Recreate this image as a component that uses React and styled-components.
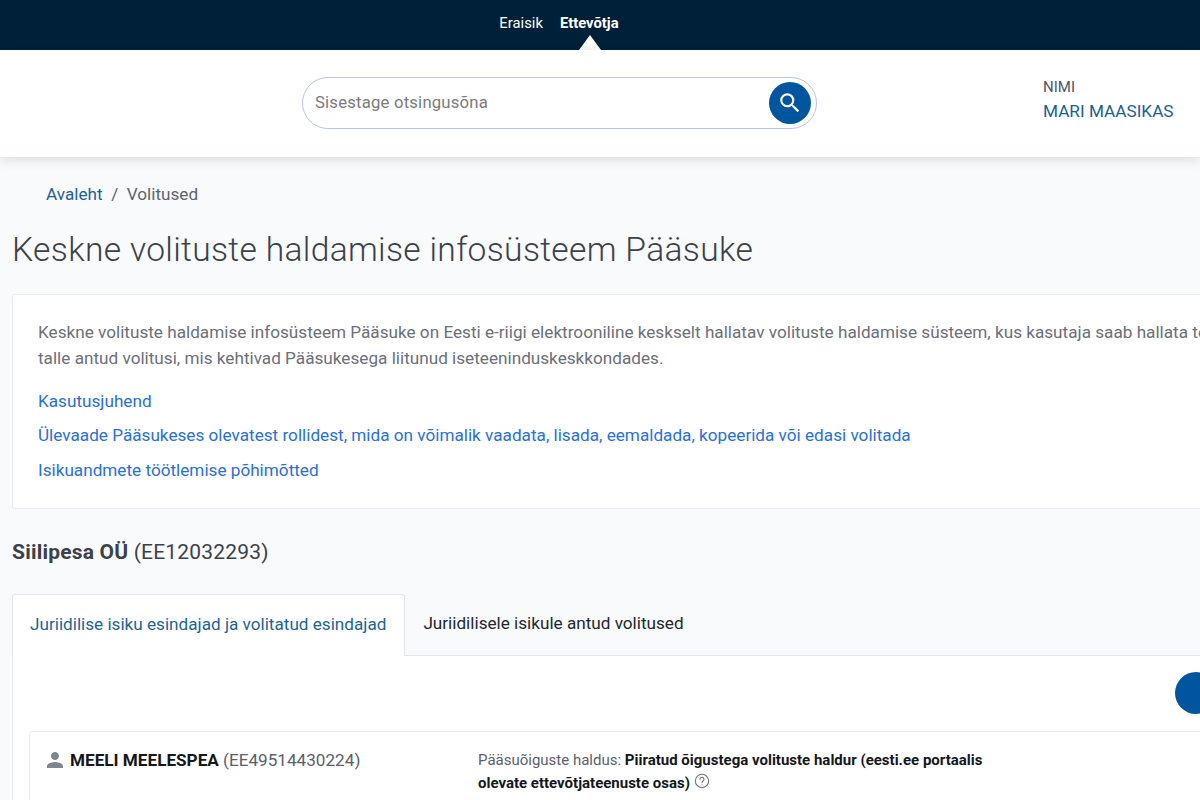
import React from "react";
import styled, { createGlobalStyle } from "styled-components";

const Global = createGlobalStyle`
  html, body { margin: 0; padding: 0; height: 100%; overflow: hidden; background: #f9fafc; }
  body { font-family: Roboto, "Liberation Sans", sans-serif; }
  * { box-sizing: border-box; }
`;
const Page = styled.div`
  width: 1200px; height: 800px; overflow: hidden; background: #f9fafc;
`;
const TopBar = styled.nav`
  height: 50px; background: #002039; display: flex; justify-content: center; align-items: flex-start;
  gap: 17px; padding-top: 15px; padding-right: 82px;
`;
const TopLink = styled.a`
  position: relative; font-size: 14.8px; line-height: 17px; color: #fff; font-weight: ${p => (p.$active ? 700 : 400)};
  ${p => p.$active && `
    &::after {
      content: ""; position: absolute; left: 19px; top: 20px; width: 0; height: 0;
      border-left: 11px solid transparent; border-right: 11px solid transparent; border-bottom: 15px solid #fff;
    }
  `}
`;
const Header = styled.header`
  position: relative; height: 107px; background: #fff; box-shadow: 0 2px 12px rgba(0,0,0,.14);
  display: flex; padding: 27px 0 0 302px;
`;
const Search = styled.div`
  width: 515px; height: 52px; border: 1px solid #b3c9de; border-radius: 26px; display: flex; align-items: center;
  justify-content: space-between; padding: 0 5px 0 12px;
`;
const Placeholder = styled.span`
  font-size: 16.7px; color: #7b7b7b; letter-spacing: .2px; margin-top: -2px;
`;
const SearchBtn = styled.button`
  width: 42px; height: 42px; border-radius: 50%; border: 0; background: #00559f; display: flex; align-items: center;
  justify-content: center; padding: 0;
`;
const User = styled.div`
  margin-left: 226px; padding-top: 1px;
`;
const UserLabel = styled.div`
  font-size: 15px; line-height: 18px; color: #4f5660;
`;
const UserName = styled.div`
  font-size: 17.2px; line-height: 24px; margin-top: 3px; color: #1d5f94; white-space: nowrap;
`;
const Main = styled.main`
  padding: 0 0 0 12px; width: 1500px;
`;
const Crumbs = styled.div`
  display: flex; gap: 8.5px; padding: 28px 0 0 34px; font-size: 17.17px; line-height: 19px; color: #5c6470;
`;
const CrumbLink = styled.a`
  color: #1d5f94;
`;
const Title = styled.h1`
  margin: 26px 0 0; font-size: 33.6px; line-height: 40px; font-weight: 300; color: #3b414b; letter-spacing: .33px;
`;
const InfoCard = styled.section`
  margin-top: 24px; height: 215px; background: #fff; border: 1px solid #e9ebee; border-radius: 3px; padding: 24px 25px;
`;
const InfoText = styled.p`
  margin: 0 0 20px; font-size: 17.17px; line-height: 26px; color: #6b7079;
`;
const InfoLink = styled.a`
  display: block; font-size: 17.17px; line-height: 20px; color: #2a6fdb; margin-bottom: 14.4px;
`;
const Company = styled.h2`
  margin: 31px 0 0; font-size: 21px; line-height: 24px; font-weight: 400; color: #3b414b; letter-spacing: .2px;
  b { font-weight: 700; }
`;
const Tabs = styled.div`
  display: flex; margin-top: 30px; height: 62px; border-bottom: 1px solid #e3e5e8;
`;
const Tab = styled.div`
  height: ${p => (p.$active ? "62px" : "61px")}; padding: 0 18px 4px ${p => (p.$active ? "17px" : "18px")};
  display: flex; align-items: center; font-size: 17.15px;
  color: ${p => (p.$active ? "#1d6496" : "#23272d")};
  ${p => p.$active && `background: #fff; border: 1px solid #e3e5e8; border-bottom: 0; border-radius: 3px 3px 0 0;`}
`;
const Panel = styled.section`
  background: #fff; border-left: 1px solid #e9ebee; height: 200px; padding: 16px 0 0 16px;
`;
const Action = styled.div`
  margin-left: 1146px; width: 42px; height: 42px; border-radius: 50%; background: #00559f;
`;
const PersonCard = styled.article`
  margin-top: 17px; height: 120px; border: 1px solid #e9ebee; border-radius: 3px; display: flex; padding: 18px 17px;
`;
const Person = styled.div`
  width: 431px; display: flex; align-items: flex-start; gap: 3px; font-size: 17.15px; line-height: 21px; color: #5b6069;
  b { color: #14171c; font-weight: 700; }
  svg { margin: -2px 0 0 -4px; }
`;
const Rights = styled.div`
  width: 520px; font-size: 15px; line-height: 23px; color: #5d6068; margin-top: -1px;
  b { color: #14171c; font-weight: 700; }
  svg { vertical-align: -1px; margin-left: 4px; }
`;

export default function App() {
  return (
    <Page>
      <Global />
      <TopBar>
        <TopLink>Eraisik</TopLink>
        <TopLink $active>Ettevõtja</TopLink>
      </TopBar>
      <Header>
        <Search>
          <Placeholder>Sisestage otsingusõna</Placeholder>
          <SearchBtn aria-label="Otsi">
            <svg width="26" height="26" viewBox="0 0 24 24" fill="#fff"><path d="M15.5 14h-.79l-.28-.27A6.47 6.47 0 0 0 16 9.5 6.5 6.5 0 1 0 9.5 16c1.61 0 3.09-.59 4.23-1.57l.27.28v.79l5 4.99L20.49 19l-4.99-5zm-6 0C7.01 14 5 11.99 5 9.5S7.01 5 9.5 5 14 7.01 14 9.5 11.99 14 9.5 14z"/></svg>
          </SearchBtn>
        </Search>
        <User>
          <UserLabel>NIMI</UserLabel>
          <UserName>MARI MAASIKAS</UserName>
        </User>
      </Header>
      <Main>
        <Crumbs>
          <CrumbLink>Avaleht</CrumbLink><span>/</span><span>Volitused</span>
        </Crumbs>
        <Title>Keskne volituste haldamise infosüsteem Pääsuke</Title>
        <InfoCard>
          <InfoText>Keskne volituste haldamise infosüsteem Pääsuke on Eesti e-riigi elektrooniline keskselt hallatav volituste haldamise süsteem, kus kasutaja saab hallata te<br />talle antud volitusi, mis kehtivad Pääsukesega liitunud iseteeninduskeskkondades.</InfoText>
          <InfoLink>Kasutusjuhend</InfoLink>
          <InfoLink>Ülevaade Pääsukeses olevatest rollidest, mida on võimalik vaadata, lisada, eemaldada, kopeerida või edasi volitada</InfoLink>
          <InfoLink>Isikuandmete töötlemise põhimõtted</InfoLink>
        </InfoCard>
        <Company><b>Siilipesa OÜ</b> (EE12032293)</Company>
        <Tabs>
          <Tab $active>Juriidilise isiku esindajad ja volitatud esindajad</Tab>
          <Tab>Juriidilisele isikule antud volitused</Tab>
        </Tabs>
        <Panel>
          <Action />
          <PersonCard>
            <Person>
              <svg width="24" height="24" viewBox="0 0 24 24" fill="#7d8792"><path d="M12 12c2.21 0 4-1.79 4-4s-1.79-4-4-4-4 1.79-4 4 1.79 4 4 4zm0 2c-2.67 0-8 1.34-8 4v2h16v-2c0-2.66-5.33-4-8-4z"/></svg>
              <span><b>MEELI MEELESPEA</b> (EE49514430224)</span>
            </Person>
            <Rights>
              Pääsuõiguste haldus: <b>Piiratud õigustega volituste haldur (eesti.ee portaalis olevate ettevõtjateenuste osas)</b>
              <svg width="16" height="16" viewBox="0 0 24 24" fill="none" stroke="#6b7079" strokeWidth="1.6" strokeLinecap="round"><circle cx="12" cy="12" r="10"/><path d="M9 9.5a3 3 0 1 1 4.6 2.5c-1 .7-1.6 1.2-1.6 2.5"/><path d="M12 17.5v.1"/></svg>
            </Rights>
          </PersonCard>
        </Panel>
      </Main>
    </Page>
  );
}
